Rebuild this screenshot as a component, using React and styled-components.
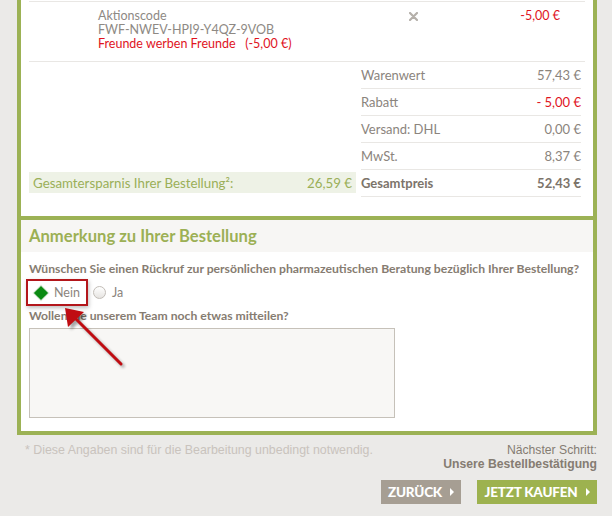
import React from "react";
import styled, { createGlobalStyle } from "styled-components";

const Global = createGlobalStyle`
  html, body { margin: 0; padding: 0; }
  body {
    background: #ebeae8;
    font-family: Lato, "Open Sans", sans-serif;
    width: 612px;
    height: 516px;
    overflow: hidden;
  }
`;

const Page = styled.div`
  width: 580px;
  margin-left: 17px;
`;

const Box = styled.div`
  background: #fff;
  border: 4px solid #9cb255;
  border-top-width: ${(p) => (p.$noTop ? "0" : "4px")};
  border-bottom-width: ${(p) => (p.$noBottom ? "0" : "4px")};
`;

const Totals = styled.div`
  padding: 1px 8px 19px 8px;
`;

const PromoRow = styled.div`
  display: flex;
  border-top: 1px solid #e9e7e4;
  border-bottom: 1px solid #e9e7e4;
  padding: 7px 25px 0 69px;
  box-sizing: border-box;
  height: 61px;
`;

const PromoText = styled.div`
  flex: 1;
  font-size: 12.5px;
  line-height: 14px;
  color: #8e8984;
`;

const Red = styled.div`
  color: #e0141e;
`;

const RemoveX = styled.div`
  width: 26px;
  display: flex;
  justify-content: center;
  padding-top: 3px;
`;

const PromoPrice = styled.div`
  width: 134px;
  text-align: right;
  font-size: 12.5px;
  line-height: 14px;
  color: #e0141e;
`;

const SummaryGrid = styled.div`
  display: grid;
  grid-template-columns: 327px 220px;
  column-gap: 5px;
`;

const Savings = styled.div`
  align-self: end;
  margin-bottom: 4px;
  height: 21px;
  background: #eef2e6;
  color: #9aaf58;
  font-size: 13.3px;
  display: flex;
  align-items: center;
  justify-content: space-between;
  padding: 0 4px;
`;

const Rows = styled.div`
  display: flex;
  flex-direction: column;
`;

const Row = styled.div`
  display: flex;
  justify-content: space-between;
  align-items: center;
  height: 26px;
  border-bottom: 1px solid #e9e7e4;
  font-size: 13px;
  color: ${(p) => (p.$bold ? "#7c746a" : "#8b847d")};
  font-weight: ${(p) => (p.$bold ? 700 : 400)};
`;

const Value = styled.span`
  color: ${(p) => (p.$red ? "#e0141e" : "inherit")};
`;

const Notes = styled.div`
  position: relative;
  padding-bottom: 13px;
`;

const NotesHeader = styled.div`
  background: #f7f6f4;
  height: 32px;
  display: flex;
  align-items: center;
  padding: 0 8px;
  font-size: 16.6px;
  font-weight: 700;
  color: #9cb055;
`;

const NotesBody = styled.div`
  padding: 9px 8px 0 8px;
`;

const Question = styled.div`
  font-size: 12.2px;
  font-weight: 700;
  line-height: 16px;
  color: #867c71;
`;

const RadioRow = styled.div`
  display: flex;
  align-items: center;
  margin: 2px 0 2px -3px;
  height: 27px;
`;

const Option = styled.label`
  display: flex;
  align-items: center;
  gap: 6px;
  height: 27px;
  box-sizing: border-box;
  font-size: 12.5px;
  color: #8b847d;
  padding: 0 6px 0 5px;
  border: 2px solid ${(p) => (p.$highlight ? "#b3161b" : "transparent")};
  box-shadow: ${(p) => (p.$highlight ? "1px 2px 4px rgba(0,0,0,0.25)" : "none")};
`;

const Diamond = styled.span`
  width: 10px;
  height: 10px;
  background: #0a8a12;
  transform: rotate(45deg);
  margin: 0 2px 0 3px;
  box-shadow: 0 0 0 1px #d8e8d6;
`;

const Circle = styled.span`
  width: 11px;
  height: 11px;
  border-radius: 50%;
  border: 1px solid #c2bdb7;
  background: linear-gradient(#ffffff, #e6e4e1);
  margin-left: -2px;
`;

const TextArea = styled.textarea`
  display: block;
  margin-top: 4px;
  width: 366px;
  height: 90px;
  box-sizing: border-box;
  border: 1px solid #c6c1b9;
  background: #f8f7f5;
  resize: none;
`;

const Arrow = styled.svg`
  position: absolute;
  left: 0;
  top: 0;
  pointer-events: none;
`;

const Footer = styled.div`
  display: flex;
  justify-content: space-between;
  padding: 7px 0 0 8px;
`;

const FootNote = styled.div`
  font-family: "Liberation Sans", Arial, sans-serif;
  font-size: 12.4px;
  line-height: 16px;
  color: #c9c3bd;
`;

const NextStep = styled.div`
  display: flex;
  flex-direction: column;
  align-items: flex-end;
  font-family: "Liberation Sans", Arial, sans-serif;
  font-size: 12.2px;
  line-height: 14px;
  color: #857c72;
  padding-top: 1px;
`;

const StrongStep = styled.div`
  font-weight: 700;
`;

const Buttons = styled.div`
  display: flex;
  gap: 16px;
  margin-top: 9px;
`;

const Button = styled.button`
  height: 24px;
  width: ${(p) => p.$w}px;
  border: 0;
  background: ${(p) => p.$bg};
  color: #fff;
  font-family: Lato, sans-serif;
  font-weight: 900;
  font-size: 13.5px;
  letter-spacing: -0.2px;
  display: flex;
  align-items: center;
  justify-content: center;
  gap: 8px;
  padding: 0;
`;

const Tri = styled.span`
  width: 0;
  height: 0;
  border-left: 4px solid #fff;
  border-top: 4px solid transparent;
  border-bottom: 4px solid transparent;
`;

export default function App() {
  return (
    <>
      <Global />
      <Page>
        <Box $noTop $noBottom>
          <Totals>
            <PromoRow>
              <PromoText>
                <div>Aktionscode</div>
                <div>FWF-NWEV-HPI9-Y4QZ-9VOB</div>
                <Red>Freunde werben Freunde&nbsp;&nbsp;&nbsp;(-5,00 €)</Red>
              </PromoText>
              <RemoveX>
                <svg width="9" height="9" viewBox="0 0 9 9">
                  <path d="M1 1L8 8M8 1L1 8" stroke="#b5b0aa" strokeWidth="2.2" strokeLinecap="round" />
                </svg>
              </RemoveX>
              <PromoPrice>-5,00 €</PromoPrice>
            </PromoRow>
            <SummaryGrid>
              <Savings>
                <span>Gesamtersparnis Ihrer Bestellung²:</span>
                <span>26,59 €</span>
              </Savings>
              <Rows>
                <Row><span>Warenwert</span><Value>57,43 €</Value></Row>
                <Row><span>Rabatt</span><Value $red>- 5,00 €</Value></Row>
                <Row><span>Versand: DHL</span><Value>0,00 €</Value></Row>
                <Row><span>MwSt.</span><Value>8,37 €</Value></Row>
                <Row $bold><span>Gesamtpreis</span><Value>52,43 €</Value></Row>
              </Rows>
            </SummaryGrid>
          </Totals>
        </Box>
        <Box>
          <Notes>
            <NotesHeader>Anmerkung zu Ihrer Bestellung</NotesHeader>
            <NotesBody>
              <Question>
                Wünschen Sie einen Rückruf zur persönlichen pharmazeutischen Beratung bezüglich Ihrer Bestellung?
              </Question>
              <RadioRow>
                <Option $highlight>
                  <Diamond />
                  Nein
                </Option>
                <Option>
                  <Circle />
                  Ja
                </Option>
              </RadioRow>
              <Question>Wollen Sie unserem Team noch etwas mitteilen?</Question>
              <TextArea />
            </NotesBody>
            <Arrow width="160" height="200">
              <defs>
                <filter id="sh" x="-50%" y="-50%" width="200%" height="200%">
                  <feGaussianBlur stdDeviation="1.5" />
                </filter>
              </defs>
              <g transform="translate(-17,-215)">
                <g opacity="0.35" filter="url(#sh)" transform="translate(3,3)">
                  <line x1="117" y1="359" x2="70" y2="312" stroke="#000" strokeWidth="3" />
                  <polygon points="61,303 64,322 80,307" fill="#000" />
                </g>
                <line x1="117" y1="359" x2="70" y2="312" stroke="#c00d12" strokeWidth="3" strokeLinecap="round" />
                <polygon points="61,303 64,322 80,307" fill="#c00d12" />
              </g>
            </Arrow>
          </Notes>
        </Box>
        <Footer>
          <FootNote>* Diese Angaben sind für die Bearbeitung unbedingt notwendig.</FootNote>
          <NextStep>
            <div>Nächster Schritt:</div>
            <StrongStep>Unsere Bestellbestätigung</StrongStep>
            <Buttons>
              <Button $w={80} $bg="#a69e93">ZURÜCK <Tri /></Button>
              <Button $w={120} $bg="#9db24f">JETZT KAUFEN <Tri /></Button>
            </Buttons>
          </NextStep>
        </Footer>
      </Page>
    </>
  );
}
